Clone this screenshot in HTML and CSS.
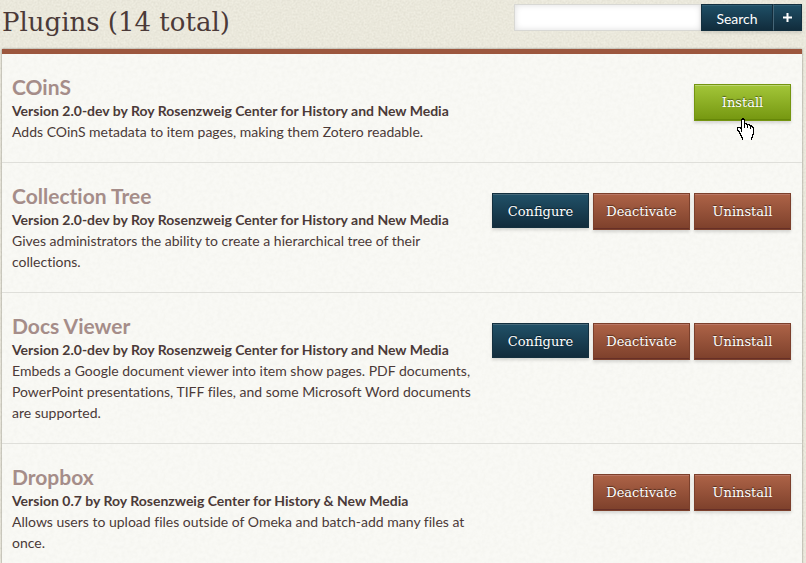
FILE: index.html
```html
<!DOCTYPE html>
<html lang="en">
<head>
<meta charset="utf-8">
<title>Plugins</title>
<link rel="stylesheet" href="styles.css">
</head>
<body>
<header class="top">
  <h1>Plugins (14 total)</h1>
  <form class="search">
    <input type="text" aria-label="Search">
    <button type="button" class="search-go">Search</button>
    <button type="button" class="search-more" aria-label="Advanced search"><svg width="9" height="9" viewBox="0 0 9 9"><path d="M3.5 0h2v3.5H9v2H5.5V9h-2V5.500H0v-2h3.500z" fill="#fff"/></svg></button>
  </form>
</header>
<main class="panel">
  <section class="plugin">
    <div class="info">
      <h2>COinS</h2>
      <p class="meta">Version 2.0-dev by Roy Rosenzweig Center for History and New Media</p>
      <p>Adds COinS metadata to item pages, making them Zotero readable.</p>
    </div>
    <div class="actions">
      <button type="button" class="btn green">Install</button>
      <svg class="cursor" width="17" height="22" viewBox="0 0 17 22" aria-hidden="true"><path d="M5.500 .5h1v1h1v4h2v1h3v1h2v1h1v1h1v7h-1v3h-1v3h-9v-3h-1v-2h-1v-2h-1v-2h-1v-1h-1v-3h3v1h1v-9h1z" fill="#fff" stroke="#000"/><path d="M7.500 5v5M10.500 7v3M13.500 8v3M4.500 10v4" fill="none" stroke="#000"/></svg>
    </div>
  </section>
  <section class="plugin">
    <div class="info">
      <h2>Collection Tree</h2>
      <p class="meta">Version 2.0-dev by Roy Rosenzweig Center for History and New Media</p>
      <p>Gives administrators the ability to create a hierarchical tree of their collections.</p>
    </div>
    <div class="actions">
      <a href="#" class="btn blue">Configure</a>
      <button type="button" class="btn red">Deactivate</button>
      <button type="button" class="btn red">Uninstall</button>
    </div>
  </section>
  <section class="plugin">
    <div class="info">
      <h2>Docs Viewer</h2>
      <p class="meta">Version 2.0-dev by Roy Rosenzweig Center for History and New Media</p>
      <p>Embeds a Google document viewer into item show pages. PDF documents, PowerPoint presentations, TIFF files, and some Microsoft Word documents are supported.</p>
    </div>
    <div class="actions">
      <a href="#" class="btn blue">Configure</a>
      <button type="button" class="btn red">Deactivate</button>
      <button type="button" class="btn red">Uninstall</button>
    </div>
  </section>
  <section class="plugin">
    <div class="info">
      <h2>Dropbox</h2>
      <p class="meta">Version 0.7 by Roy Rosenzweig Center for History &amp; New Media</p>
      <p>Allows users to upload files outside of Omeka and batch-add many files at once.</p>
    </div>
    <div class="actions">
      <button type="button" class="btn red">Deactivate</button>
      <button type="button" class="btn red">Uninstall</button>
    </div>
  </section>
</main>
</body>
</html>
```
FILE: styles.css
```css
* { box-sizing: border-box; }
:root {
  --grain: url("data:image/svg+xml,%3Csvg xmlns='http://www.w3.org/2000/svg' width='160' height='160'%3E%3Cfilter id='n'%3E%3CfeTurbulence type='fractalNoise' baseFrequency='.5' numOctaves='3' stitchTiles='stitch'/%3E%3CfeColorMatrix values='0 0 0 0 .4 0 0 0 0 .38 0 0 0 0 .3 .3 0 0 0 -.08'/%3E%3C/filter%3E%3Crect width='160' height='160' filter='url(%23n)'/%3E%3C/svg%3E");
  --paper: url("data:image/svg+xml,%3Csvg xmlns='http://www.w3.org/2000/svg' width='160' height='160'%3E%3Cfilter id='n'%3E%3CfeTurbulence type='fractalNoise' baseFrequency='.25' numOctaves='3' stitchTiles='stitch'/%3E%3CfeColorMatrix values='0 0 0 0 .5 0 0 0 0 .5 0 0 0 0 .42 .12 0 0 0 -.04'/%3E%3C/filter%3E%3Crect width='160' height='160' filter='url(%23n)'/%3E%3C/svg%3E");
}
body {
  margin: 0;
  padding: 0 4px 0 2px;
  background: var(--grain) #efede1;
  color: #4b3a38;
  font: 14px/21px Lato, "Liberation Sans", sans-serif;
  font-variant-ligatures: none;
}
h1, h2, p { margin: 0; }
.top {
  display: flex;
  justify-content: space-between;
  align-items: flex-start;
  height: 49px;
}
h1 {
  padding-top: 4px;
  font: 26px/36px "DejaVu Serif", serif;
  white-space: nowrap;
}
.search { display: flex; padding-top: 4px; }
.search input {
  width: 187px;
  height: 27px;
  padding: 0 6px;
  border: 1px solid #d8d8d4;
  border-right: 0;
  background: #fff;
  box-shadow: inset 0 0 6px #ddd;
  font: inherit;
}
.search button {
  display: flex;
  align-items: center;
  justify-content: center;
  width: 72px;
  height: 27px;
  padding: 2px 0 0;
  border: 1px solid #14303f;
  background: linear-gradient(#1f4f66, #112c3c);
  box-shadow: inset 0 1px #2f5d72, 0 2px 3px rgba(0, 0, 0, .12);
  color: #fff;
  font: inherit;
}
.search .search-more { width: 29px; padding: 0; border-left-color: #466677; }
.panel {
  min-height: calc(100vh - 49px);
  border-top: 5px solid #9c573e;
  background: var(--paper) #f9f9f5;
  box-shadow: 0 0 2px rgba(0, 0, 0, .45);
}
.plugin {
  display: flex;
  justify-content: space-between;
  align-items: flex-start;
  padding: 20px 11px 20px 10px;
  border-bottom: 1px solid #dfdfda;
}
.info { flex: 0 1 474px; }
h2 {
  color: #a58d89;
  font-size: 21px;
  font-weight: 700;
  line-height: 26px;
}
.meta { font-weight: 700; white-space: nowrap; }
.actions {
  position: relative;
  display: flex;
  align-items: flex-start;
  gap: 4px;
  padding-top: 10px;
}
.btn {
  width: 97px;
  height: 37px;
  padding: 0;
  border: 1px solid;
  color: #fff;
  font: 13px/35px "DejaVu Serif", serif;
  text-align: center;
  text-decoration: none;
  text-shadow: 0 -1px 1px rgba(0, 0, 0, .5);
}
.green {
  border-color: #749510;
  background: linear-gradient(#a3c639, #759710);
  box-shadow: inset 0 1px #bdd574, inset 0 -1px #668709, 0 2px 3px rgba(0, 0, 0, .15);
}
.red {
  border-color: #7c402c;
  background: linear-gradient(#ad6347, #7d402b);
  box-shadow: inset 0 1px #b97765, inset 0 -1px #672f27, 0 2px 3px rgba(0, 0, 0, .15);
}
.blue {
  height: 35px;
  border-color: #14303f;
  background: linear-gradient(#215168, #112c3c);
  box-shadow: inset 0 1px #46697a, 0 2px 3px rgba(0, 0, 0, .15);
}
.cursor {
  position: absolute;
  top: 44px;
  left: 43px;
  shape-rendering: crispEdges;
}
```
